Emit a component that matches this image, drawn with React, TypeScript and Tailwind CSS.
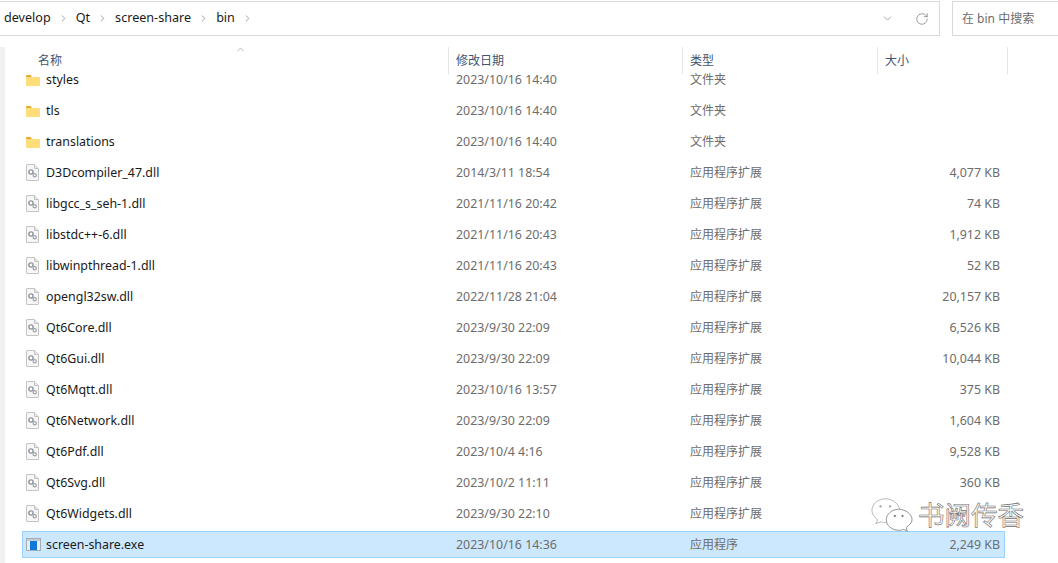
import { ChevronRight, ChevronDown, ChevronUp, RotateCw } from 'lucide-react';

const font = "font-['Noto_Sans','Noto_Sans_CJK_SC',sans-serif]";

const files = [
  { name: 'styles', date: '2023/10/16 14:40', type: '文件夹', size: '', kind: 'folder' },
  { name: 'tls', date: '2023/10/16 14:40', type: '文件夹', size: '', kind: 'folder' },
  { name: 'translations', date: '2023/10/16 14:40', type: '文件夹', size: '', kind: 'folder' },
  { name: 'D3Dcompiler_47.dll', date: '2014/3/11 18:54', type: '应用程序扩展', size: '4,077 KB', kind: 'dll' },
  { name: 'libgcc_s_seh-1.dll', date: '2021/11/16 20:42', type: '应用程序扩展', size: '74 KB', kind: 'dll' },
  { name: 'libstdc++-6.dll', date: '2021/11/16 20:43', type: '应用程序扩展', size: '1,912 KB', kind: 'dll' },
  { name: 'libwinpthread-1.dll', date: '2021/11/16 20:43', type: '应用程序扩展', size: '52 KB', kind: 'dll' },
  { name: 'opengl32sw.dll', date: '2022/11/28 21:04', type: '应用程序扩展', size: '20,157 KB', kind: 'dll' },
  { name: 'Qt6Core.dll', date: '2023/9/30 22:09', type: '应用程序扩展', size: '6,526 KB', kind: 'dll' },
  { name: 'Qt6Gui.dll', date: '2023/9/30 22:09', type: '应用程序扩展', size: '10,044 KB', kind: 'dll' },
  { name: 'Qt6Mqtt.dll', date: '2023/10/16 13:57', type: '应用程序扩展', size: '375 KB', kind: 'dll' },
  { name: 'Qt6Network.dll', date: '2023/9/30 22:09', type: '应用程序扩展', size: '1,604 KB', kind: 'dll' },
  { name: 'Qt6Pdf.dll', date: '2023/10/4 4:16', type: '应用程序扩展', size: '9,528 KB', kind: 'dll' },
  { name: 'Qt6Svg.dll', date: '2023/10/2 11:11', type: '应用程序扩展', size: '360 KB', kind: 'dll' },
  { name: 'Qt6Widgets.dll', date: '2023/9/30 22:10', type: '应用程序扩展', size: '', kind: 'dll' },
  { name: 'screen-share.exe', date: '2023/10/16 14:36', type: '应用程序', size: '2,249 KB', kind: 'exe' },
];

const FolderIcon = () => (
  <svg className="mt-px" width="14" height="11" viewBox="0 0 14 11">
    <path d="M0 1 Q0 0 1 0 H4.5 L6 2 H0 Z" fill="#e8a92e" />
    <path d="M0 2 H13 Q14 2 14 3 V10 Q14 11 13 11 H1 Q0 11 0 10 Z" fill="#ffdd7a" />
  </svg>
);

const DllIcon = () => (
  <svg width="13" height="17" viewBox="0 0 13 17">
    <path d="M.5 1 Q.5 .5 1 .5 H8.5 L12.5 4.5 V16 Q12.5 16.5 12 16.5 H1 Q.5 16.5 .5 16 Z" fill="#f7f7f7" stroke="#c4c4c4" />
    <path d="M8.5 .5 V4.5 H12.5" fill="#e6e6e6" stroke="#c4c4c4" />
    <circle cx="5" cy="8" r="2.1" fill="#fff" stroke="#8d949c" strokeWidth="1.4" />
    <circle cx="8.7" cy="11.3" r="1.6" fill="#fff" stroke="#9ba1a8" strokeWidth="1.2" />
  </svg>
);

const ExeIcon = () => (
  <svg width="15" height="13" viewBox="0 0 15 13">
    <rect x=".5" y=".5" width="14" height="12" fill="#e8eef3" stroke="#a3adb6" />
    <rect x="1" y="1" width="13" height="2" fill="#c3ccd4" />
    <rect x="4" y="3" width="7" height="9" fill="#0f78d8" />
  </svg>
);

const Header = ({ width, label }: { width: string; label: string }) => (
  <div className={`${width} h-[27px] pt-[5px] pl-[7px] border-r border-[#e5e5e5] text-[12px] leading-[18px] text-[#43556e]`}>
    {label}
  </div>
);

export default function App() {
  const crumbs = ['develop', 'Qt', 'screen-share', 'bin'];
  return (
    <div className={`${font} relative w-[1058px] h-[563px] overflow-hidden bg-white`}>
      {/* address bar + search */}
      <div className="flex h-[35px] mt-px">
        <div className="w-[940px] flex items-center border-y border-r border-[#d9d9d9] pl-[4px] pr-[10px]">
          {crumbs.map((c) => (
            <div key={c} className="flex items-center">
              <span className="text-[12.6px] text-[#1a1a1a]">{c}</span>
              <ChevronRight className="w-[11px] h-[11px] mx-[7px] text-[#777]" strokeWidth={1.5} />
            </div>
          ))}
          <ChevronDown className="w-[13px] h-[13px] ml-auto text-[#777]" strokeWidth={1.2} />
          <RotateCw className="w-[14px] h-[14px] ml-[21px] text-[#777]" strokeWidth={1.2} />
        </div>
        <div className="ml-[12px] flex-1 flex items-center border-y border-l border-[#d9d9d9] pl-[9px] text-[12px] text-[#6d6d6d]">
          在 bin 中搜索
        </div>
      </div>

      <div className="flex mt-[11px]">
        <div className="w-[5px] h-[516px] bg-[#f0f0f0]" />
        <div className="flex-1 relative">
          {/* column headers */}
          <ChevronUp className="absolute left-[230px] -top-[3px] w-[11px] h-[11px] text-[#888]" strokeWidth={1.3} />
          <div className="flex -mb-[8px] relative">
            <div className="w-[444px] h-[27px] pt-[5px] pl-[33px] border-r border-[#e5e5e5] text-[12px] leading-[18px] text-[#43556e]">
              名称
            </div>
            <Header width="w-[234px]" label="修改日期" />
            <Header width="w-[195px]" label="类型" />
            <Header width="w-[130px]" label="大小" />
          </div>

          {/* rows */}
          <div className="flex flex-col gap-[4px] pl-[17px] w-[1000px]">
            {files.map((f) => (
              <div
                key={f.name}
                className={`flex items-center h-[27px] text-[12.4px] border ${
                  f.kind === 'exe' ? 'bg-[#cce8ff] border-[#99d1ff]' : 'border-transparent'
                }`}
              >
                <div className="w-[23px] pl-[3px] flex justify-start shrink-0">
                  {f.kind === 'folder' && <FolderIcon />}
                  {f.kind === 'dll' && <DllIcon />}
                  {f.kind === 'exe' && <ExeIcon />}
                </div>
                <div className="w-[410px] pt-[2px] text-[#1a1a1a]">{f.name}</div>
                <div className="w-[233px] pt-[2px] text-[#6d6d6d]">{f.date}</div>
                <div className="w-[200px] text-[12px] pl-px text-[#6d6d6d]">{f.type}</div>
                <div className="w-[111px] pt-[2px] text-right text-[#6d6d6d]">{f.size}</div>
              </div>
            ))}
          </div>
        </div>
      </div>

      {/* watermark */}
      <div className="absolute left-[871px] top-[497px] flex items-center gap-[5px] pointer-events-none">
        <svg width="42" height="36" viewBox="0 0 44 36" fill="#fff" stroke="#b5b5b5" strokeWidth="1">
          <path d="M15 1 C7 1 1 7 1 13 C1 17 3 20 7 23 L5 27 L11 25 C13 26 15 26 17 26 C24 26 30 20 30 13 C30 7 23 1 15 1 Z" />
          <path d="M29 12 C22 12 16 17 16 23 C16 29 22 34 29 34 C31 34 32 34 34 33 L38 35 L37 31 C40 29 43 26 43 23 C43 17 36 12 29 12 Z" stroke="#8f8f8f" />
          <circle cx="10" cy="9" r="1.2" fill="#a0a0a0" stroke="none" />
          <circle cx="20" cy="9" r="1.2" fill="#a0a0a0" stroke="none" />
          <circle cx="25" cy="19" r="1.2" fill="#808080" stroke="none" />
          <circle cx="33" cy="19" r="1.2" fill="#808080" stroke="none" />
        </svg>
        <span className="text-[26.5px] leading-none text-white [-webkit-text-stroke:0.6px_#6e6e6e]">书阙传香</span>
      </div>
    </div>
  );
}
